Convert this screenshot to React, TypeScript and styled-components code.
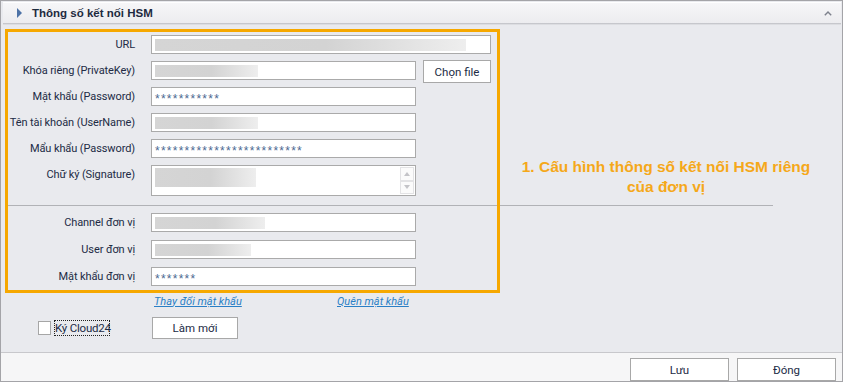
import React from 'react';
import styled, { createGlobalStyle } from 'styled-components';

const GlobalStyle = createGlobalStyle`
  * { box-sizing: border-box; }
  body {
    margin: 0;
    background: #e9eaee;
    font-family: Roboto, "Liberation Sans", Arial, sans-serif;
  }
`;

const orange = '#f6a800';

const Window = styled.div`
  width: 843px;
  height: 382px;
  border: 1px solid #a4a4a8;
  background: #e9eaee;
  display: flex;
  flex-direction: column;
  overflow: hidden;
  color: #222b45;
  font-size: 11px;
`;

const Header = styled.div`
  margin: 1px 1px 0 2px;
  height: 22px;
  display: flex;
  align-items: center;
  padding: 0 9px 0 14px;
  background: linear-gradient(#f6f6f8, #ececef);
  border-top: 1px solid #ffffff;
  border-bottom: 1px solid #c6c7cc;
  box-shadow: 0 1px 0 #dcdde1;
`;

const HeaderArrow = styled.span`
  width: 0;
  height: 0;
  border-top: 5px solid transparent;
  border-bottom: 5px solid transparent;
  border-left: 5px solid #4d72a6;
  margin-right: 10px;
`;

const HeaderTitle = styled.span`
  flex: 1;
  font-weight: bold;
  font-size: 11.5px;
  color: #1d2a3e;
  font-family: "Liberation Sans", Arial, sans-serif;
`;

const Body = styled.div`
  flex: 1;
  position: relative;
  display: flex;
  flex-direction: column;
`;

const FieldGrid = styled.div<{ $gap: number; $top: number }>`
  display: grid;
  grid-template-columns: 134px 265px;
  column-gap: 16px;
  row-gap: ${({ $gap }) => $gap}px;
  margin-top: ${({ $top }) => $top}px;
  align-items: start;
`;

const Label = styled.div`
  text-align: right;
  line-height: 19px;
  height: 19px;
  white-space: nowrap;
  letter-spacing: -0.1px;
`;

const Control = styled.div`
  display: flex;
  gap: 7px;
`;

const Input = styled.div<{ $w?: number }>`
  width: ${({ $w }) => $w ?? 265}px;
  height: 19px;
  background: #ffffff;
  border: 1px solid #aaaaaa;
  padding-left: 3px;
  display: flex;
  align-items: center;
  flex-shrink: 0;
`;

const Masked = styled.span`
  font-family: "Liberation Sans", Arial, sans-serif;
  font-size: 12px;
  letter-spacing: 1.25px;
  color: #4b6890;
  padding-top: 5px;
  line-height: 12px;
`;

const Redacted = styled.div<{ $w: number; $h?: number }>`
  width: ${({ $w }) => $w}px;
  height: ${({ $h }) => $h ?? 12}px;
  background: linear-gradient(90deg, #d5d5d5 0%, #d3d3d3 55%, #eeeeee 100%);
`;

const TextArea = styled.div`
  width: 265px;
  height: 31px;
  background: #ffffff;
  border: 1px solid #aaaaaa;
  padding: 1px 1px 1px 3px;
  display: flex;
  justify-content: space-between;
`;

const SpinColumn = styled.div`
  display: flex;
  flex-direction: column;
`;

const SpinButton = styled.div<{ $up?: boolean }>`
  width: 14px;
  height: 14px;
  border: 1px solid #e3e3e5;
  background: #fbfbfb;
  display: flex;
  align-items: center;
  justify-content: center;

  &::after {
    content: '';
    border-left: 3.5px solid transparent;
    border-right: 3.5px solid transparent;
    ${({ $up }) =>
      $up ? 'border-bottom: 4px solid #c4c4c8;' : 'border-top: 4px solid #c4c4c8;'}
  }
`;

const Button = styled.button<{ $w: number; $h?: number }>`
  width: ${({ $w }) => $w}px;
  height: ${({ $h }) => $h ?? 23}px;
  background: #ffffff;
  border: 1px solid #a8a8a8;
  font-family: Roboto, "Liberation Sans", Arial, sans-serif;
  font-size: 11.5px;
  color: #222b45;
  padding: 0;
  flex-shrink: 0;
`;

const PickButton = styled(Button)`
  margin: -1px 0 -3px;
`;

const Separator = styled.div`
  margin: 9px 0 7px 7px;
  width: 765px;
  height: 1px;
  background: #b1b2b6;
`;

const LinkRow = styled.div`
  display: flex;
  margin: 7px 0 0 153px;
  height: 16px;
  align-items: center;
`;

const LinkCell = styled.div<{ $w?: number }>`
  width: ${({ $w }) => ($w ? `${$w}px` : 'auto')};
`;

const TextLink = styled.a`
  font-size: 11px;
  font-style: italic;
  color: #2a7fc6;
  text-decoration: underline;
  white-space: nowrap;
`;

const ActionRow = styled.div`
  display: flex;
  align-items: center;
  margin: 8px 0 0 37px;
  height: 22px;
`;

const CheckBox = styled.span`
  width: 13px;
  height: 14px;
  background: #ffffff;
  border: 1px solid #a6a6a6;
  margin-right: 3px;
`;

const CheckLabel = styled.span`
  width: 56px;
  border: 1px dotted #222222;
  line-height: 14px;
  font-size: 11.5px;
  letter-spacing: -0.2px;
  white-space: nowrap;
  margin-right: 42px;
`;

const Footer = styled.div`
  margin-top: auto;
  height: 29px;
  border-top: 1px solid #c8c8cc;
  background: #f6f6f7;
  display: flex;
  justify-content: flex-end;
  gap: 8px;
  padding: 5px 6px 0 0;
`;

const Frame = styled.div`
  position: absolute;
  left: 4px;
  top: 5px;
  width: 495px;
  height: 264px;
  border: 3px solid ${orange};
  pointer-events: none;
`;

const Callout = styled.div`
  position: absolute;
  left: 500px;
  top: 133px;
  width: 330px;
  text-align: center;
  font-family: "Liberation Sans", Arial, sans-serif;
  font-weight: bold;
  font-size: 15.5px;
  line-height: 20px;
  color: #f5a81a;
`;

const App: React.FC = () => {
  return (
    <>
      <GlobalStyle />
      <Window>
        <Header>
          <HeaderArrow />
          <HeaderTitle>Thông số kết nối HSM</HeaderTitle>
          <svg width="8" height="5" viewBox="0 0 8 5">
            <polyline points="0.8,4.2 4,1 7.2,4.2" fill="none" stroke="#7d818c" strokeWidth="1.4" />
          </svg>
        </Header>
        <Body>
          <FieldGrid $gap={7} $top={11}>
            <Label>URL</Label>
            <Control>
              <Input $w={340}>
                <Redacted $w={311} />
              </Input>
            </Control>
            <Label>Khóa riêng (PrivateKey)</Label>
            <Control>
              <Input>
                <Redacted $w={103} />
              </Input>
              <PickButton $w={68}>Chọn file</PickButton>
            </Control>
            <Label>Mật khẩu (Password)</Label>
            <Control>
              <Input>
                <Masked>***********</Masked>
              </Input>
            </Control>
            <Label>Tên tài khoản (UserName)</Label>
            <Control>
              <Input>
                <Redacted $w={103} />
              </Input>
            </Control>
            <Label>Mẩu khẩu (Password)</Label>
            <Control>
              <Input>
                <Masked>*************************</Masked>
              </Input>
            </Control>
            <Label>Chữ ký (Signature)</Label>
            <Control>
              <TextArea>
                <Redacted $w={101} $h={19} style={{ marginTop: 1 }} />
                <SpinColumn>
                  <SpinButton $up />
                  <SpinButton />
                </SpinColumn>
              </TextArea>
            </Control>
          </FieldGrid>

          <Separator />

          <FieldGrid $gap={8} $top={0}>
            <Label>Channel đơn vị</Label>
            <Control>
              <Input>
                <Redacted $w={110} />
              </Input>
            </Control>
            <Label>User đơn vị</Label>
            <Control>
              <Input>
                <Redacted $w={96} />
              </Input>
            </Control>
            <Label>Mật khẩu đơn vị</Label>
            <Control>
              <Input>
                <Masked>*******</Masked>
              </Input>
            </Control>
          </FieldGrid>

          <LinkRow>
            <LinkCell $w={183}>
              <TextLink>Thay đổi mật khẩu</TextLink>
            </LinkCell>
            <LinkCell>
              <TextLink>Quên mật khẩu</TextLink>
            </LinkCell>
          </LinkRow>

          <ActionRow>
            <CheckBox />
            <CheckLabel>Ký Cloud24</CheckLabel>
            <Button $w={86} $h={22}>Làm mới</Button>
          </ActionRow>

          <Footer>
            <Button $w={99}>Lưu</Button>
            <Button $w={99}>Đóng</Button>
          </Footer>

          <Frame />
          <Callout>
            1. Cấu hình thông số kết nối HSM riêng
            <br />
            của đơn vị
          </Callout>
        </Body>
      </Window>
    </>
  );
};

export default App;
